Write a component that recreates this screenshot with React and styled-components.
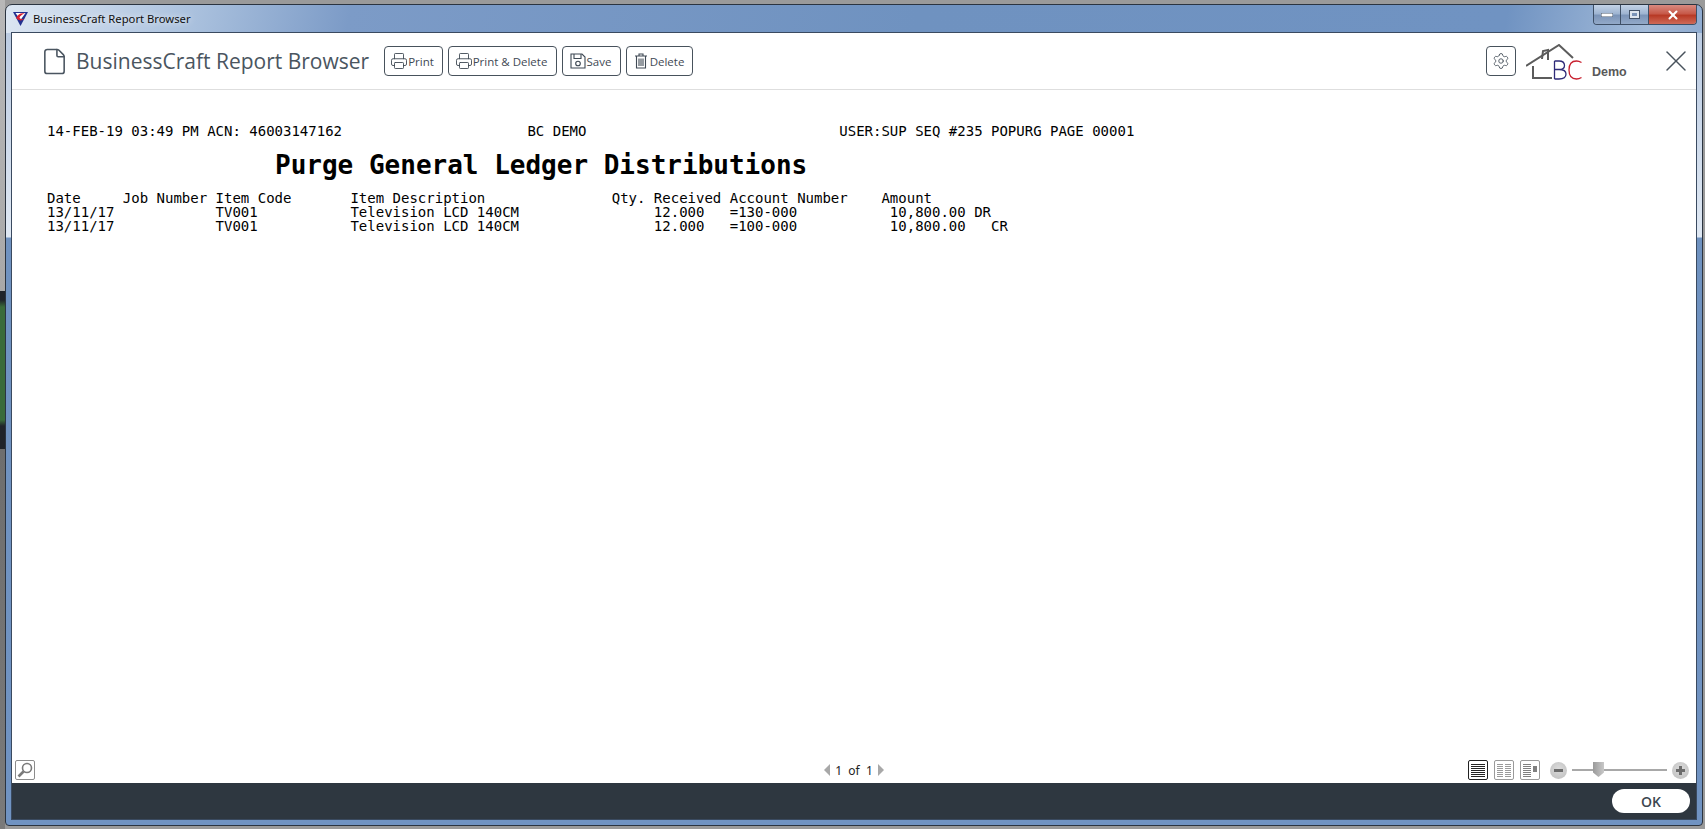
import React from 'react'
import styled, { createGlobalStyle } from 'styled-components'
import { Printer, Settings, X, File } from 'lucide-react'

const GlobalStyle = createGlobalStyle`
    html, body {
        margin: 0;
        padding: 0;
        height: 829px;
        overflow: hidden;
        background: #8c8c8c;
    }
    #root {
        height: 829px;
    }
`

const Desktop = styled.div`
    height: 829px;
    box-sizing: border-box;
    padding: 4px 2px 3px 5px;
    background:
        linear-gradient(180deg, #b8b8b8 0, #a8a8a8 291px, #20242a 291px, #20242a 300px, #3a6b3a 307px, #3a6b3a 420px, #20242a 426px, #20242a 449px, #6e6e6e 449px, #7a7a7a 100%) left top / 5px 100% no-repeat,
        linear-gradient(180deg, #9a9a9a 0, #9a9a9a 100%);
`
const Window = styled.div`
    height: 100%;
    box-sizing: border-box;
    display: flex;
    flex-direction: column;
    border: 1px solid #2b3440;
    border-radius: 7px 7px 4px 4px;
    padding: 0 5px 5px 5px;
    background:
        linear-gradient(100deg, #dce6f2 0, #a9c0dd 190px, #7c9bc7 340px, #6f92c0 900px, #7093c2 1480px, #a3bbd9 1620px, #8fabd0 100%) left top / 100% 28px no-repeat,
        linear-gradient(180deg, #b7c8e0 0, #dfe8f3 232px, #6f92c0 233px, #7093c2 100%);
`
const TitleBar = styled.div`
    height: 27px;
    flex: none;
    display: flex;
    align-items: center;
    gap: 5px;
    padding-left: 2px;
    font-family: "Noto Sans", "Liberation Sans", sans-serif;
    font-size: 11.25px;
    color: #101010;
`
const TitleText = styled.span`
    text-shadow: 0 0 6px rgba(255, 255, 255, 0.9);
`
const CaptionButtons = styled.div`
    margin-left: auto;
    height: 19px;
    display: flex;
    align-self: flex-start;
    border: 1px solid #3e4f66;
    border-top: none;
    border-radius: 0 0 4px 4px;
    overflow: hidden;
`
const CaptionButton = styled.div`
    width: ${p => p.$w}px;
    display: flex;
    align-items: center;
    justify-content: center;
    background: ${p => p.$close
        ? 'linear-gradient(180deg, #d88a80 0, #c75a4a 45%, #b83a26 55%, #cf6a58 100%)'
        : 'linear-gradient(180deg, #c3d2e6 0, #9fb5d2 45%, #7b94b8 55%, #93a9c8 100%)'};
    border-left: ${p => p.$first ? 'none' : '1px solid #3e4f66'};
`
const Client = styled.div`
    flex: 1;
    min-height: 0;
    display: flex;
    flex-direction: column;
    background: #ffffff;
    border: 1px solid #3a4a60;
`
const Header = styled.div`
    height: 57px;
    flex: none;
    box-sizing: border-box;
    display: flex;
    align-items: center;
    padding-left: 28px;
    border-bottom: 1px solid #dedede;
    font-family: "Open Sans", "Noto Sans", sans-serif;
`
const HeaderTitle = styled.div`
    margin-left: 7px;
    font-size: 21px;
    color: #4a5560;
    width: 308px;
    white-space: nowrap;
`
const ToolButtons = styled.div`
    display: flex;
    gap: 5px;
`
const ToolButton = styled.button`
    width: ${p => p.$w}px;
    height: 30px;
    box-sizing: border-box;
    display: flex;
    align-items: center;
    justify-content: center;
    gap: 0;
    padding: 0 3px 0 0;
    background: #ffffff;
    border: 1px solid #48525c;
    border-radius: 4px;
    font-family: "Open Sans", "Noto Sans", sans-serif;
    font-size: 11.5px;
    color: #3f4954;
`
const HeaderRight = styled.div`
    margin-left: auto;
    display: flex;
    align-items: center;
    padding-right: 2px;
`
const GearButton = styled.div`
    width: 30px;
    height: 30px;
    box-sizing: border-box;
    display: flex;
    align-items: center;
    justify-content: center;
    border: 1px solid #48525c;
    border-radius: 4px;
    margin-right: 10px;
`
const Logo = styled.div`
    width: 56px;
    height: 36px;
    margin-top: 1px;
`
const DemoLabel = styled.div`
    width: 36px;
    font-family: "Liberation Sans", sans-serif;
    font-size: 12.5px;
    font-weight: bold;
    color: #595959;
    margin: 22px 30px 0 10px;
`
const CloseIcon = styled.div`
    display: flex;
    color: #48525c;
`
const Report = styled.div`
    flex: 1;
    min-height: 0;
    padding: 34px 0 0 35px;
    font-family: "DejaVu Sans Mono", monospace;
    font-size: 14px;
    line-height: 14px;
    color: #000000;
`
const ReportLine = styled.div`
    white-space: pre;
    height: 14px;
`
const ReportTitle = styled.div`
    white-space: pre;
    margin: 11px 0 10px 228px;
    font-size: 26px;
    line-height: 32px;
    font-weight: bold;
`
const ViewerBar = styled.div`
    height: 26px;
    flex: none;
    display: grid;
    grid-template-columns: 1fr auto 1fr;
    align-items: center;
    padding: 0 7px 0 3px;
`
const ZoomBox = styled.div`
    width: 20px;
    height: 20px;
    box-sizing: border-box;
    display: flex;
    align-items: center;
    justify-content: center;
    border: 1px solid #8c8c8c;
    border-radius: 2px;
`
const Pager = styled.div`
    display: flex;
    align-items: center;
    gap: 5px;
    padding-left: 4px;
    font-family: "Noto Sans", sans-serif;
    font-size: 12px;
    color: #222222;
`
const PagerArrow = styled.span`
    width: 0;
    height: 0;
    border-top: 6px solid transparent;
    border-bottom: 6px solid transparent;
    ${p => p.$right ? 'border-left: 6px solid #a8a8a8;' : 'border-right: 6px solid #a8a8a8;'}
`
const ViewControls = styled.div`
    justify-self: end;
    display: flex;
    align-items: center;
    gap: 6px;
`
const LayoutBox = styled.div`
    width: 20px;
    height: 20px;
    display: flex;
    align-items: center;
    justify-content: center;
    box-sizing: border-box;
    border: 1px solid ${p => p.$active ? '#222222' : '#9a9a9a'};
    border-radius: 2px;
`
const ZoomControl = styled.div`
    display: flex;
    align-items: center;
    gap: 5px;
    margin-left: 4px;
`
const RoundButton = styled.div`
    width: 17px;
    height: 17px;
    border-radius: 50%;
    background: radial-gradient(circle at 50% 40%, #dcdcdc, #bcbcbc);
    display: flex;
    align-items: center;
    justify-content: center;
`
const Slider = styled.div`
    position: relative;
    width: 95px;
    height: 2px;
    background: #a8a8a8;
`
const SliderThumb = styled.div`
    position: absolute;
    left: 21px;
    top: -7px;
    width: 11px;
    height: 15px;
    background: linear-gradient(90deg, #9a9a9a, #c8c8c8);
    clip-path: polygon(0 0, 100% 0, 100% 70%, 50% 100%, 0 70%);
`
const Footer = styled.div`
    height: 36px;
    flex: none;
    display: flex;
    align-items: center;
    justify-content: flex-end;
    padding-right: 6px;
    background: #2e3740;
`
const OkButton = styled.button`
    width: 78px;
    height: 24px;
    border: none;
    border-radius: 12px;
    background: #ffffff;
    font-family: "Open Sans", "Noto Sans", sans-serif;
    font-size: 14px;
    font-weight: 600;
    color: #3c4650;
`

const LogoMark = () => (
    <Logo>
        <svg width="56" height="36" viewBox="0 0 56 36" fill="none">
            <path d="M0 22 L33 1 L47 14" stroke="#5c5c5c" strokeWidth="2" />
            <path d="M16 15 L17 7 L22 6 V16" stroke="#5c5c5c" strokeWidth="2" />
            <path d="M7 22 V34 H26" stroke="#5c5c5c" strokeWidth="2" />
            <path d="M28.500 17 V35 M28.500 17 H33 Q38.500 17 38.500 21.500 Q38.500 25.500 33 25.500 H28.500 M33 25.500 Q40 25.500 40 30 Q40 35 33 35 H28.500" stroke="#2e2a78" strokeWidth="1.3" />
            <path d="M55.500 18.500 Q53 17 50.500 17 Q43 17 43 26 Q43 35 50.500 35 Q53 35 55.500 33.500" stroke="#c8202f" strokeWidth="1.3" />
        </svg>
    </Logo>
)

const SaveIcon = () => (
    <svg width="18" height="18" viewBox="0 0 18 18" fill="none" stroke="#3f4954" strokeWidth="1.1">
        <path d="M2 2 H13 L16 5 V16 H2 Z" />
        <path d="M5 2 V6.500 H12 V2" />
        <circle cx="9" cy="11.500" r="2.300" />
    </svg>
)

const TrashIcon = () => (
    <svg width="18" height="18" viewBox="0 0 18 18" fill="none" stroke="#3f4954" strokeWidth="1.1">
        <path d="M3 4 H15 M7 4 V2 H11 V4" />
        <path d="M4.500 4 V16 H13.500 V4" />
        <path d="M7 6.500 V14 M9 6.500 V14 M11 6.500 V14" />
    </svg>
)

const MagnifierIcon = () => (
    <svg width="18" height="18" viewBox="0 0 18 18" fill="none" stroke="#7a7a7a">
        <circle cx="11" cy="7" r="4.500" strokeWidth="1.6" />
        <path d="M7.500 10.500 L2.500 15.500" strokeWidth="2.6" />
    </svg>
)

const MinusMark = () => (
    <svg width="11" height="11" fill="#6c6c6c"><rect x="1" y="4" width="9" height="3" /></svg>
)
const PlusMark = () => (
    <svg width="11" height="11" fill="#6c6c6c"><rect x="1" y="4" width="9" height="3" /><rect x="4" y="1" width="3" height="9" /></svg>
)

const layoutLines = (x, w, n) => Array.from({ length: n }, (_, i) => (
    <rect key={i} x={x} y={1 + i * 2} width={w} height="1" />
))

const SingleIcon = () => (
    <svg width="14" height="14" viewBox="0 0 14 14" fill="#222222">{layoutLines(0, 14, 7)}</svg>
)
const TwoColIcon = () => (
    <svg width="14" height="14" viewBox="0 0 14 14" fill="#9a9a9a">{layoutLines(0, 6, 7)}{layoutLines(8, 6, 7)}</svg>
)
const SideIcon = () => (
    <svg width="14" height="14" viewBox="0 0 14 14" fill="#808080">{layoutLines(0, 8, 7)}<rect x="10" y="3" width="4" height="6" /></svg>
)

const AppIcon = () => (
    <svg width="15" height="14" viewBox="0 0 15 14">
        <path d="M0 0 H15 L7.500 14 Z" fill="#23308f" />
        <path d="M2.500 1 H12.500 L7.500 8 Z" fill="#ffffff" />
        <path d="M3 6 Q6 0 12 1.500 Q7 3 6.500 6 Q8 8 12 6.500 Q7 10.500 3 6 Z" fill="#d92030" />
    </svg>
)

function App() {
    return (
        <Desktop>
            <GlobalStyle />
            <Window>
                <TitleBar>
                    <AppIcon />
                    <TitleText>BusinessCraft Report Browser</TitleText>
                    <CaptionButtons>
                        <CaptionButton $first $w={26}>
                            <svg width="12" height="4"><rect width="12" height="4" fill="#ffffff" stroke="#44546a" /></svg>
                        </CaptionButton>
                        <CaptionButton $w={27}>
                            <svg width="11" height="9"><rect x="0.5" y="0.5" width="10" height="8" fill="#dfe6ef" stroke="#44546a" /><rect x="3" y="3" width="5" height="3" fill="#7b94b8" /></svg>
                        </CaptionButton>
                        <CaptionButton $close $w={47}>
                            <X size={14} strokeWidth={3.5} color="#ffffff" />
                        </CaptionButton>
                    </CaptionButtons>
                </TitleBar>
                <Client>
                    <Header>
                        <File size={29} strokeWidth={1.3} color="#4a5560" />
                        <HeaderTitle>BusinessCraft Report Browser</HeaderTitle>
                        <ToolButtons>
                            <ToolButton $w={59}><Printer size={18} strokeWidth={1.2} />Print</ToolButton>
                            <ToolButton $w={109}><Printer size={18} strokeWidth={1.2} />Print &amp; Delete</ToolButton>
                            <ToolButton $w={59}><SaveIcon />Save</ToolButton>
                            <ToolButton $w={67}><TrashIcon />Delete</ToolButton>
                        </ToolButtons>
                        <HeaderRight>
                            <GearButton><Settings size={18} strokeWidth={1.2} color="#48525c" /></GearButton>
                            <LogoMark />
                            <DemoLabel>Demo</DemoLabel>
                            <CloseIcon><X size={36} strokeWidth={1} /></CloseIcon>
                        </HeaderRight>
                    </Header>
                    <Report>
                        <ReportLine>{'14-FEB-19 03:49 PM ACN: 46003147162                      BC DEMO                              USER:SUP SEQ #235 POPURG PAGE 00001'}</ReportLine>
                        <ReportTitle>Purge General Ledger Distributions</ReportTitle>
                        <ReportLine>{'Date     Job Number Item Code       Item Description               Qty. Received Account Number    Amount'}</ReportLine>
                        <ReportLine>{'13/11/17            TV001           Television LCD 140CM                12.000   =130-000           10,800.00 DR'}</ReportLine>
                        <ReportLine>{'13/11/17            TV001           Television LCD 140CM                12.000   =100-000           10,800.00   CR'}</ReportLine>
                    </Report>
                    <ViewerBar>
                        <ZoomBox><MagnifierIcon /></ZoomBox>
                        <Pager>
                            <PagerArrow />
                            <span>1&nbsp; of &nbsp;1</span>
                            <PagerArrow $right />
                        </Pager>
                        <ViewControls>
                            <LayoutBox $active><SingleIcon /></LayoutBox>
                            <LayoutBox><TwoColIcon /></LayoutBox>
                            <LayoutBox><SideIcon /></LayoutBox>
                            <ZoomControl>
                                <RoundButton><MinusMark /></RoundButton>
                                <Slider><SliderThumb /></Slider>
                                <RoundButton><PlusMark /></RoundButton>
                            </ZoomControl>
                        </ViewControls>
                    </ViewerBar>
                    <Footer><OkButton>OK</OkButton></Footer>
                </Client>
            </Window>
        </Desktop>
    )
}

export default App
